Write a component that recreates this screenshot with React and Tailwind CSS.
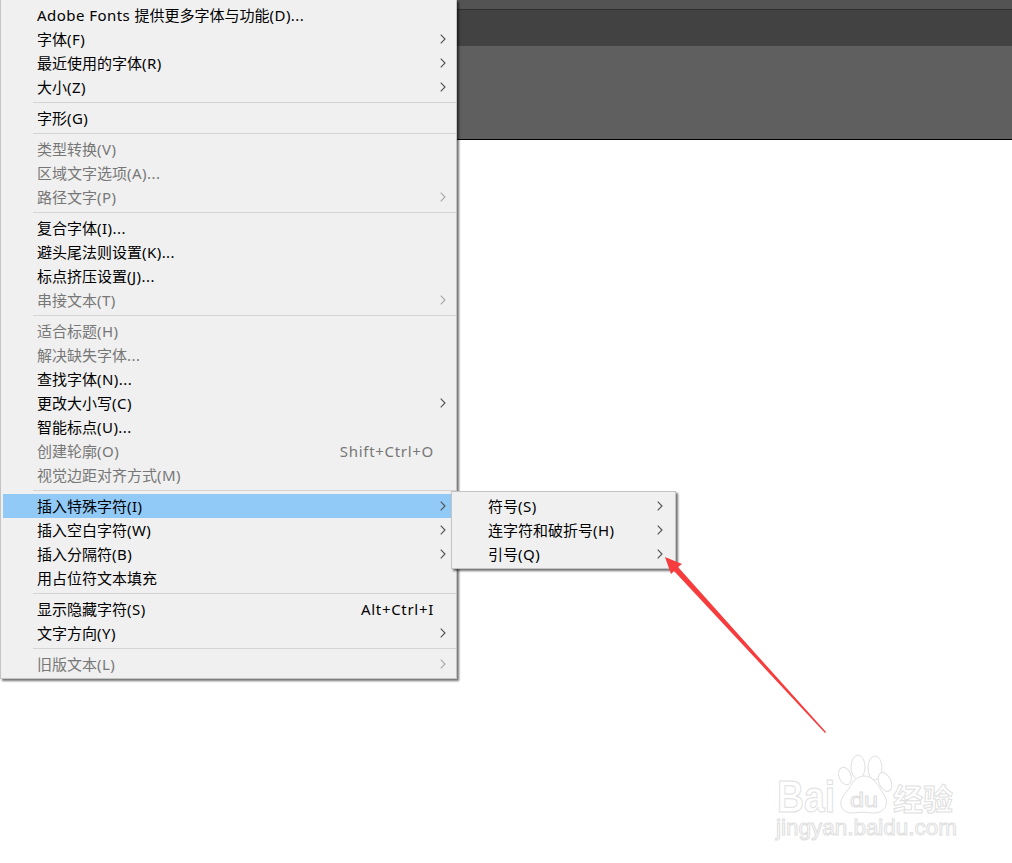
import React from 'react';

const FONT = "font-['Noto_Sans','Noto_Sans_CJK_SC',sans-serif]";

// menu content, in order. "-" is a separator
const menuItems = [
  { label: 'Adobe Fonts 提供更多字体与功能(D)...' },
  { label: '字体(F)', sub: true },
  { label: '最近使用的字体(R)', sub: true },
  { label: '大小(Z)', sub: true },
  '-',
  { label: '字形(G)' },
  '-',
  { label: '类型转换(V)', off: true },
  { label: '区域文字选项(A)...', off: true },
  { label: '路径文字(P)', off: true, sub: true },
  '-',
  { label: '复合字体(I)...' },
  { label: '避头尾法则设置(K)...' },
  { label: '标点挤压设置(J)...' },
  { label: '串接文本(T)', off: true, sub: true },
  '-',
  { label: '适合标题(H)', off: true },
  { label: '解决缺失字体...', off: true },
  { label: '查找字体(N)...' },
  { label: '更改大小写(C)', sub: true },
  { label: '智能标点(U)...' },
  { label: '创建轮廓(O)', off: true, keys: 'Shift+Ctrl+O' },
  { label: '视觉边距对齐方式(M)', off: true },
  '-',
  { label: '插入特殊字符(I)', sub: true, active: true },
  { label: '插入空白字符(W)', sub: true },
  { label: '插入分隔符(B)', sub: true },
  { label: '用占位符文本填充' },
  '-',
  { label: '显示隐藏字符(S)', keys: 'Alt+Ctrl+I' },
  { label: '文字方向(Y)', sub: true },
  '-',
  { label: '旧版文本(L)', off: true, sub: true },
];

const subItems = ['符号(S)', '连字符和破折号(H)', '引号(Q)'];

// latin runs sit a little wider than the CJK in the original UI font
function Label({ text }) {
  return text.split(/([\x20-\x7e]+)/).map((part, i) =>
    /[\x20-\x7e]/.test(part) ? (
      <span key={i} className="tracking-[0.45px]">{part}</span>
    ) : (
      part
    ),
  );
}

function Chevron({ off }) {
  return (
    <svg width="6" height="10" viewBox="0 0 6 10" className={off ? 'text-[#a8a8a8]' : 'text-[#505050]'}>
      <path d="M0.7 0.7 L5 5 L0.7 9.3" fill="none" stroke="currentColor" strokeWidth="1.1" />
    </svg>
  );
}

function Row({ item }) {
  return (
    <div className={`flex h-6 items-center pl-[34px] mr-[3px] ${item.active ? 'bg-[#91c9f7]' : ''} ${item.off ? 'text-[#777777]' : 'text-black'}`}>
      <span className="flex-1 whitespace-nowrap"><Label text={item.label} /></span>
      {item.keys && <span className="mr-[19px] whitespace-nowrap tracking-[0.7px]">{item.keys}</span>}
      {item.sub && (
        <span className="mr-[7px] flex">
          <Chevron off={item.off} />
        </span>
      )}
    </div>
  );
}

function Separator() {
  return (
    <div className="flex h-[7px] items-center pl-[30px]">
      <div className="h-px w-full bg-[#d4d4d4]" />
    </div>
  );
}

function Watermark() {
  const outline = { fill: '#ffffff', stroke: '#e0e0e0', strokeWidth: 1 };
  return (
    <svg width="200" height="105" viewBox="0 0 200 105" className="absolute left-[770px] top-[748px]">
      <ellipse cx="88" cy="19" rx="7" ry="12" {...outline} />
      <ellipse cx="105" cy="20" rx="7" ry="12" {...outline} />
      <ellipse cx="75" cy="28" rx="6" ry="9" transform="rotate(-20 75 28)" {...outline} />
      <ellipse cx="115" cy="34" rx="6" ry="10" transform="rotate(-25 115 34)" {...outline} />
      <path d="M94 28 C104 28 108 38 113 45 C121 56 114 66 102 65 C96 64 90 64 84 65 C72 66 67 56 74 47 C81 39 84 28 94 28 Z" {...outline} />
      <text x="7" y="64" fontFamily="Liberation Sans" fontWeight="700" fontSize="44" textLength="58" lengthAdjust="spacingAndGlyphs" {...outline}>Bai</text>
      <text x="80" y="59" fontFamily="Liberation Sans" fontSize="21" textLength="28" lengthAdjust="spacingAndGlyphs" {...outline}>du</text>
      <text x="123" y="62" fontFamily="Noto Sans CJK SC" fontWeight="700" fontSize="30" {...outline}>经验</text>
      <text x="6" y="87" fontFamily="Liberation Sans" fontSize="22" textLength="181" lengthAdjust="spacingAndGlyphs" {...outline}>jingyan.baidu.com</text>
    </svg>
  );
}

export default function App() {
  return (
    <div className={`relative h-[863px] w-[1012px] overflow-hidden bg-white text-[15px] leading-6 ${FONT}`}>
      {/* app chrome behind the menu */}
      <div className="h-[9px] bg-[#535353]" />
      <div className="h-px bg-[#303030]" />
      <div className="h-[36px] bg-[#424242]" />
      <div className="h-[93px] border-b border-black bg-[#5f5f5f] box-content" />

      {/* main menu */}
      <div className="absolute left-0 top-0 w-[457px] border border-[#c4c4c4] border-t-0 bg-[#f0f0f0] pb-[2px] pl-[2px] pt-[3px] shadow-[2px_2px_2px_rgba(0,0,0,0.55)]">
        {menuItems.map((item, i) => (item === '-' ? <Separator key={i} /> : <Row key={i} item={item} />))}
      </div>

      {/* submenu */}
      <div className="absolute left-[451px] top-[491px] w-[225px] border border-[#c4c4c4] bg-[#f0f0f0] py-[2px] shadow-[2px_2px_2px_rgba(0,0,0,0.55)]">
        {subItems.map((label) => (
          <div key={label} className="flex h-6 items-center pl-[36px] pr-[12px] text-black">
            <span className="flex-1 whitespace-nowrap"><Label text={label} /></span>
            <Chevron />
          </div>
        ))}
      </div>

      {/* red annotation arrow */}
      <svg width="1012" height="863" viewBox="0 0 1012 863" className="absolute left-0 top-0">
        <polygon points="665,557 682,564 678,567 826,732 825,733 674,571 671,574" fill="#f63c3c" />
      </svg>

      <Watermark />
    </div>
  );
}
